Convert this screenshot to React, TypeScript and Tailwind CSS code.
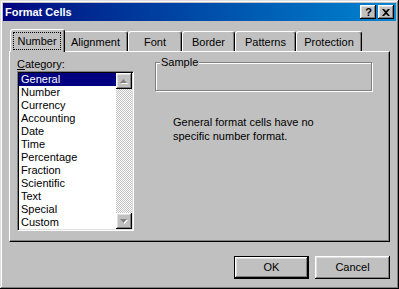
import React from "react";

const raised =
  "bg-[#c0c0c0] shadow-[inset_-1px_-1px_#000,inset_1px_1px_#fff,inset_-2px_-2px_#808080,inset_2px_2px_#dfdfdf]";

const items = [
  "General",
  "Number",
  "Currency",
  "Accounting",
  "Date",
  "Time",
  "Percentage",
  "Fraction",
  "Scientific",
  "Text",
  "Special",
  "Custom",
];

const tabs: { label: string; w: string }[] = [
  { label: "Alignment", w: "w-[65px]" },
  { label: "Font", w: "w-[54px]" },
  { label: "Border", w: "w-[53px]" },
  { label: "Patterns", w: "w-[61px]" },
  { label: "Protection", w: "w-[66px]" },
];

function ArrowUp() {
  return (
    <svg width="8" height="5" viewBox="0 0 8 5">
      <polygon points="4.5,1 8,5 1,5" fill="#fff" />
      <polygon points="3.5,0 7,4 0,4" fill="#808080" />
    </svg>
  );
}

function ArrowDown() {
  return (
    <svg width="8" height="5" viewBox="0 0 8 5">
      <polygon points="1,1 8,1 4.5,5" fill="#fff" />
      <polygon points="0,0 7,0 3.5,4" fill="#808080" />
    </svg>
  );
}

export default function App() {
  return (
    <div className="w-[399px] h-[289px] bg-[#c0c0c0] p-[3px] flex flex-col font-['Liberation_Sans',Arial,sans-serif] text-[11px] text-black shadow-[inset_-1px_-1px_#000,inset_1px_1px_#dfdfdf,inset_-2px_-2px_#808080,inset_2px_2px_#fff]">
      {/* Title bar */}
      <div className="h-[18px] flex items-center justify-between pl-[2px] pr-[2px] bg-gradient-to-r from-[#000080] to-[#1084d0]">
        <span className="text-white font-bold text-[11px] leading-[13px]">Format Cells</span>
        <div className="flex gap-[2px]">
          <div className={"w-[16px] h-[14px] flex items-center justify-center " + raised}>
            <span className="font-bold text-[11px] leading-[11px] pl-[1px]">?</span>
          </div>
          <div className={"w-[16px] h-[14px] flex items-center justify-center " + raised}>
            <svg width="8" height="7" viewBox="0 0 8 7">
              <path d="M0 0H2L4 2L6 0H8L5 3.5L8 7H6L4 5L2 7H0L3 3.5Z" fill="#000" />
            </svg>
          </div>
        </div>
      </div>

      {/* Body */}
      <div className="flex flex-col px-[6px] mt-[8px]">
        {/* Tabs */}
        <div className="flex items-end h-[23px] -mb-px relative z-10 pl-[3px]">
          <div className="w-[55px] h-[23px] -mx-[2px] relative z-10 bg-[#c0c0c0] border-l border-t border-white border-r border-r-black shadow-[inset_-1px_0_#808080] rounded-t-[3px] pt-[2px] pl-[2px] pr-[3px] pb-[2px] flex">
            <div className="flex-1 border border-dotted border-black flex items-center justify-center leading-[13px]">
              Number
            </div>
          </div>
          {tabs.map((t) => (
            <div
              key={t.label}
              className={
                t.w +
                " h-[20px] mb-px bg-[#c0c0c0] border-l border-t border-white border-r border-r-black shadow-[inset_-1px_0_#808080] rounded-t-[3px] flex items-center justify-center pt-[2px] leading-[13px]"
              }
            >
              {t.label}
            </div>
          ))}
        </div>

        {/* Panel */}
        <div className="h-[191px] border-t border-l border-white border-r border-b border-r-black border-b-black shadow-[inset_-1px_-1px_#808080] flex pl-[7px]">
          <div className="flex flex-col pt-[6px]">
            <div className="h-[13px] leading-[13px]">
              <span className="underline">C</span>ategory:
            </div>
            <div className="w-[117px] h-[160px] bg-white border border-t-[#808080] border-l-[#808080] border-r-white border-b-white shadow-[inset_1px_1px_#000,inset_-1px_-1px_#dfdfdf] p-px flex">
              <div className="flex-1 flex flex-col">
                {items.map((it, i) => (
                  <div
                    key={it}
                    className={
                      i === 0
                        ? "h-[13px] leading-[13px] pl-[2px] bg-[#000080] text-white"
                        : "h-[13px] leading-[13px] pl-[2px]"
                    }
                  >
                    {it}
                  </div>
                ))}
              </div>
              <div className="w-[16px] flex flex-col bg-[repeating-conic-gradient(#c0c0c0_0_25%,#fff_0_50%)] bg-size-[2px_2px]">
                <div className={"h-[16px] flex items-center justify-center " + raised}>
                  <ArrowUp />
                </div>
                <div className="flex-1" />
                <div className={"h-[16px] flex items-center justify-center " + raised}>
                  <ArrowDown />
                </div>
              </div>
            </div>
          </div>

          <div className="flex flex-col pt-[10px] ml-[21px]">
            <div className="relative w-[217px] h-[29px] border border-[#808080] shadow-[1px_1px_#fff,inset_1px_1px_#fff]">
              <span className="absolute left-[4px] -top-[7px] px-px bg-[#c0c0c0] leading-[13px]">Sample</span>
            </div>
            <div className="mt-[24px] ml-[18px] leading-[14px]">
              General format cells have no
              <br />
              specific number format.
            </div>
          </div>
        </div>

        {/* Buttons */}
        <div className="flex justify-end gap-[6px] mt-[14px]">
          <div className="w-[75px] h-[23px] border border-black bg-[#c0c0c0] shadow-[inset_-1px_-1px_#000,inset_1px_1px_#fff,inset_-2px_-2px_#808080,inset_2px_2px_#dfdfdf] flex items-center justify-center leading-[13px]">
            OK
          </div>
          <div className={"w-[75px] h-[23px] flex items-center justify-center leading-[13px] " + raised}>
            Cancel
          </div>
        </div>
      </div>
    </div>
  );
}
